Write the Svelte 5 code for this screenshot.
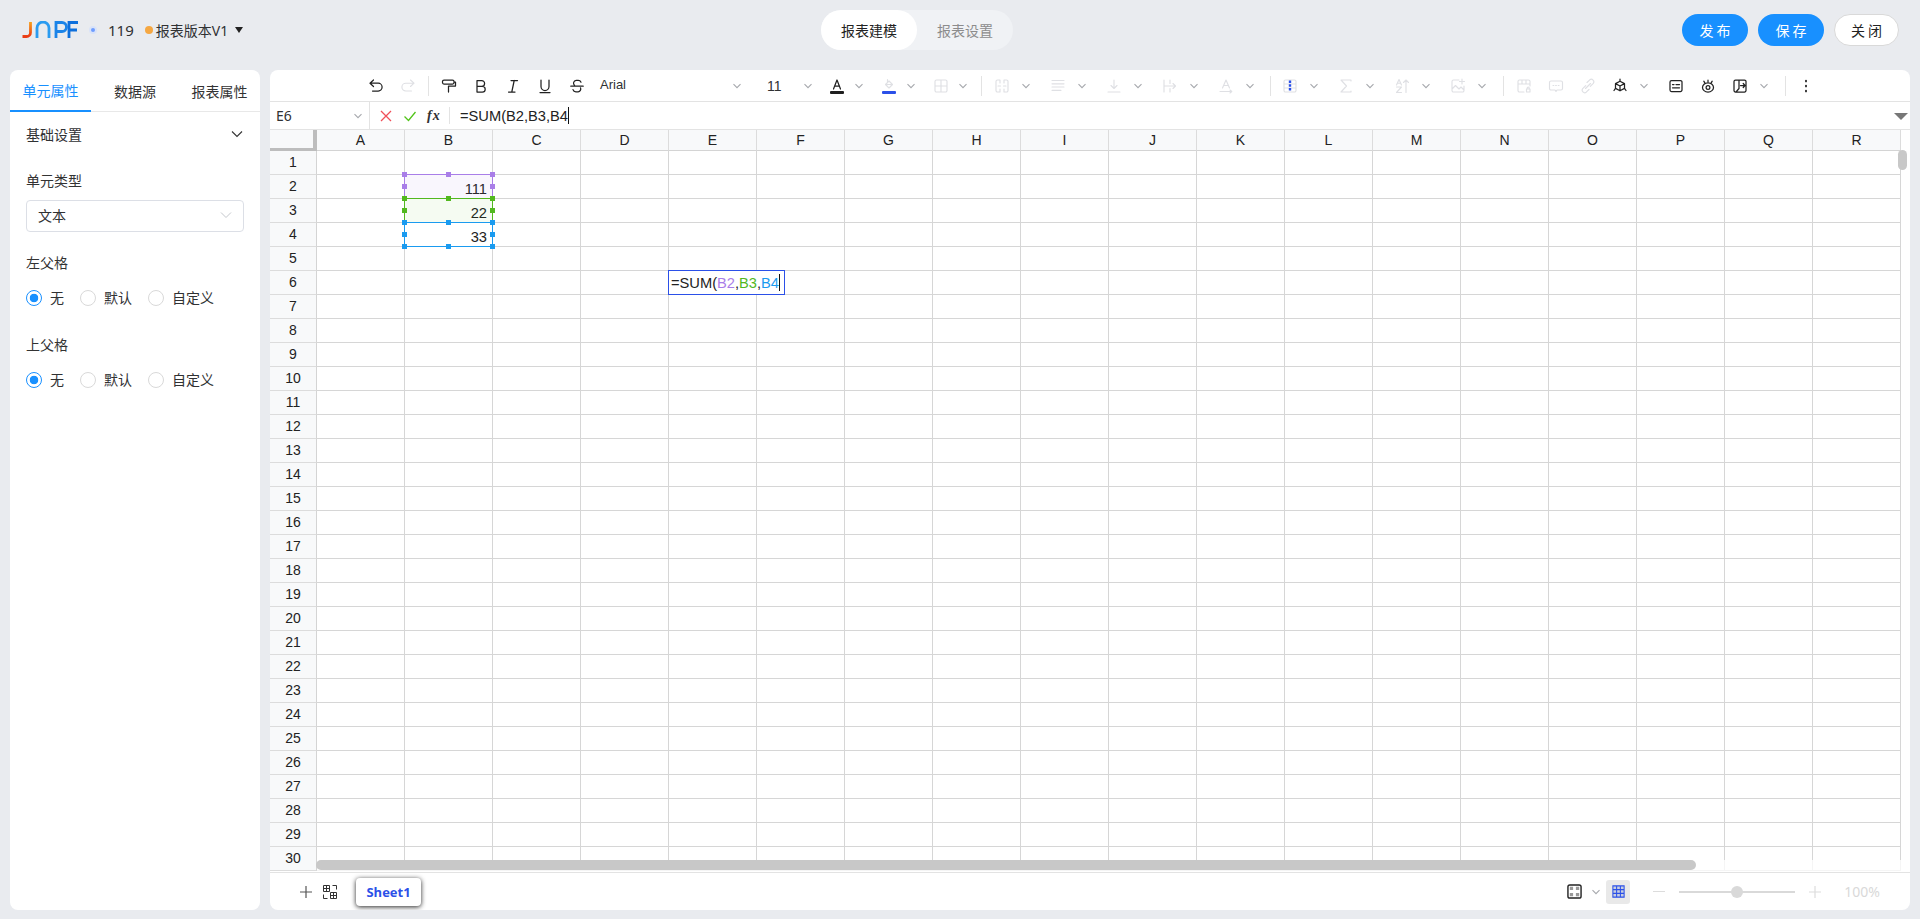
<script>
  const columns = "ABCDEFGHIJKLMNOPQR".split("");
  const rows = Array.from({ length: 30 }, (_, i) => i + 1);
  const values = { "B2": "111", "B3": "22", "B4": "33" };

  // one path per icon, 16x16 box, stroked with currentColor
  const paths = {
    undo: "M5.5 2 2 5.2l3.5 3.3M2 5.2h8.2a3.9 3.9 0 0 1 0 7.8H4.5",
    redo: "M10.5 2 14 5.2l-3.5 3.3M14 5.2H5.8a3.9 3.9 0 0 0 0 7.8h5.700",
    paint: "M3 2h8.500A1.500 1.500 0 0 1 13 3.500v1A1.500 1.500 0 0 1 11.500 6H3a1.500 1.500 0 0 1-1.500-1.500v-1A1.500 1.500 0 0 1 3 2zM13 4h1.500v4H7.500v6",
    bold: "M4 2.500h4.700a2.900 2.900 0 0 1 0 5.800H4zM4 8.300h5.300a2.900 2.900 0 0 1 0 5.800H4z",
    italic: "M6 2.500h6.500M3.500 14H10M9.200 2.500 6.800 14",
    underline: "M4 2v6.500a4 4 0 0 0 8 0V2M3 14.600h10",
    strike: "M12 4.200A3 3 0 0 0 9.200 2.400H7.200a2.800 2.800 0 0 0-1.600 5M1.800 8.200h12.400M4 11.600a3 3 0 0 0 2.900 2.200h2.200a2.800 2.800 0 0 0 2.400-4",
    color: "M4.500 11 8 2l3.500 9M5.600 8h4.800",
    fill: "M4.500 6.500 8 3l3.500 3.500L8 10zM6.500 1.500v3M5 6.500h6",
    border: "M3.500 2h9A1.500 1.500 0 0 1 14 3.500v9a1.500 1.500 0 0 1-1.500 1.500h-9A1.500 1.500 0 0 1 2 12.500v-9A1.500 1.500 0 0 1 3.500 2zM8 2v12M2 8h12",
    merge: "M6 2H3.500A1.500 1.500 0 0 0 2 3.500v9A1.500 1.500 0 0 0 3.500 14H6M10 2h2.500A1.500 1.500 0 0 1 14 3.500v9a1.500 1.500 0 0 1-1.500 1.500H10M6 2v3M6 11v3M10 2v3M10 11v3M4 8h2.500M12 8H9.500",
    align: "M2 2.500h12M2 5.800h12M2 9h12M2 12.300h9",
    valign: "M8 2v8M5 7.500 8 10.500l3-3M2 14h12",
    wrap: "M2 2v12M8 2v3.500M8 10.500V14M2 8h11M11 5.500 13.500 8 11 10.500",
    rotate: "M4.500 10 8 2l3.500 8M5.600 7.500h4.800M2 13.500h11.500M12 12l1.800 1.500L12 15",
    freeze: "M3.500 2h9A1.500 1.500 0 0 1 14 3.500v9a1.500 1.500 0 0 1-1.500 1.500h-9A1.500 1.500 0 0 1 2 12.500v-9A1.500 1.500 0 0 1 3.500 2zM2 6h12M2 10h12",
    sigma: "M13 3V2H3l5.500 6L3 14h10v-1",
    sort: "M2.500 7 5 1.500 7.500 7M3.300 5.200h3.400M2.500 9h5l-5 5.500h5M12 14.500V2M9.500 4.500 12 2l2.500 2.500",
    image: "M9 2H3.500A1.500 1.500 0 0 0 2 3.500v9A1.500 1.500 0 0 0 3.500 14h9a1.500 1.500 0 0 0 1.500-1.500V8M2 11l3.500-3.500L9 11l2-2 3 3M12 1v5M9.500 3.500h5",
    table: "M8 14H3.500A1.500 1.500 0 0 1 2 12.500v-9A1.500 1.500 0 0 1 3.500 2h9A1.500 1.500 0 0 1 14 3.500V8M2 6h12M6 2v4M10 2v4M10.500 11h3.500v3h-3.500zM11.200 11v-1a1 1 0 0 1 2 0v1",
    comment: "M3 3h10a1.500 1.500 0 0 1 1.500 1.500v6A1.500 1.500 0 0 1 13 12H9l-1 1.500L7 12H3a1.500 1.500 0 0 1-1.500-1.500v-6A1.500 1.500 0 0 1 3 3zM5 7.500h.8M7.600 7.500h.8M10.200 7.500h.8",
    link: "M7 4.500 9.800 1.800a2.500 2.500 0 0 1 3.500 3.500l-3 3M9 11.500l-2.800 2.700a2.500 2.500 0 0 1-3.500-3.500l3-3M5.500 10.500l5-5",
    cube: "M8 3.200 12.500 5.600v4.800L8 12.800l-4.500-2.400V5.600zM3.500 5.600 8 8l4.500-2.400M8 8v4.800M8 1.200v2M2 12.500l1.500-2.100M14 12.500l-1.500-2.100",
    caption: "M3.500 2.500h9A1.500 1.500 0 0 1 14 4v8a1.500 1.500 0 0 1-1.500 1.500h-9A1.500 1.500 0 0 1 2 12V4a1.500 1.500 0 0 1 1.500-1.500zM4.500 6.500h1.500M8 6.500h3.500M4.500 9.800h7",
    eye: "M8 4.800c3.200 0 5.500 2.200 5.500 4.600S11.200 14 8 14s-5.500-2.200-5.500-4.600S4.800 4.800 8 4.800zM8 7.500a1.900 1.900 0 1 1 0 3.800 1.900 1.900 0 0 1 0-3.800zM4.800 4.800l-1-1.600M8 4V2.200M11.200 4.800l1-1.600",
    exportIcon: "M3.500 2h9A1.500 1.500 0 0 1 14 3.500v9a1.500 1.500 0 0 1-1.500 1.500h-9A1.500 1.500 0 0 1 2 12.500v-9A1.500 1.500 0 0 1 3.500 2zM7 2v8.500L4 14M8.500 7.500H13M11.200 5.500 13 7.500l-1.800 2",
    dots: "M8 2.600v.8M8 7.600v.8M8 12.600v.8"
  };

  // toolbar description, left to right; kind sets which box the item gets
  const toolbar = [
    { icon: "undo" }, { icon: "redo", off: true }, { sep: "first" },
    { icon: "paint" }, { icon: "bold" }, { icon: "italic" }, { icon: "underline" }, { icon: "strike" },
    { select: "Arial", width: "font" }, { select: "11", width: "size" },
    { icon: "color", bar: "#1f1f1f", menu: "small" }, { icon: "fill", off: true, bar: "#2b50e8", menu: "small" },
    { icon: "border", off: true, menu: "small" }, { sep: "second" },
    { icon: "merge", off: true, menu: "wide" }, { icon: "align", off: true, menu: "wide" },
    { icon: "valign", off: true, menu: "wide" }, { icon: "wrap", off: true, menu: "wide" },
    { icon: "rotate", off: true, menu: "wide" }, { sep: "third" },
    { icon: "freeze", off: true, accent: "M8 2.500v11", menu: "wide" }, { icon: "sigma", off: true, menu: "wide" },
    { icon: "sort", off: true, menu: "wide" }, { icon: "image", off: true, menu: "wide" }, { sep: "fourth" },
    { icon: "table", off: true }, { icon: "comment", off: true }, { icon: "link", off: true },
    { icon: "cube", menu: "wide" }, { icon: "caption" }, { icon: "eye" }, { icon: "exportIcon", menu: "wide" },
    { sep: "fourth" }, { icon: "dots", heavy: true }
  ];

  const ranges = [
    { row: 2, tone: "purple" },
    { row: 3, tone: "green" },
    { row: 4, tone: "blue" }
  ];
  const handles = ["tl", "tm", "tr", "ml", "mr", "bl", "bm", "br"];
  const radios = ["无", "默认", "自定义"];
</script>

{#snippet chevron(size = 10)}
  <svg class="chev" width={size} height={size} viewBox="0 0 10 10"><path d="M1.500 3.200 5 6.700l3.500-3.500" /></svg>
{/snippet}

{#snippet radioGroup()}
  <div class="radios">
    {#each radios as label, i}
      <span class="radio-item">
        <span class="radio" class:checked={i === 0}></span>
        {label}
      </span>
    {/each}
  </div>
{/snippet}

<div class="page">
  <header class="topbar">
    <div class="brand">
      <svg class="logo" width="56" height="18" viewBox="0 0 56 18" fill="none">
        <defs>
          <linearGradient id="logoJ" x1="0" y1="0" x2="0" y2="1">
            <stop offset="0" stop-color="#f7a11a" />
            <stop offset="1" stop-color="#ea3b16" />
          </linearGradient>
        </defs>
        <path d="M8.500 1v10.500a4 4 0 0 1-4 4H.5" stroke="url(#logoJ)" stroke-width="2.800" />
        <path d="M15 17V7a6 6 0 0 1 12 0V17" stroke="#2a9bf0" stroke-width="2.800" />
        <path d="M34 17V1.500h6a4.500 4.500 0 0 1 0 9h-6" stroke="#1b84e8" stroke-width="2.800" />
        <path d="M47 17V1.500h9M47 9h8" stroke="#0d6fdc" stroke-width="2.800" />
      </svg>
      <span class="brand-dot"></span>
      <span class="report-id">119</span>
      <span class="version-dot"></span>
      <span class="version">报表版本V1</span>
      <span class="caret"></span>
    </div>
    <div class="mode-switch">
      <span class="mode active">报表建模</span>
      <span class="mode">报表设置</span>
    </div>
    <div class="actions">
      <button class="btn primary">发布</button>
      <button class="btn primary">保存</button>
      <button class="btn plain">关闭</button>
    </div>
  </header>

  <main class="workspace">
    <aside class="side">
      <div class="tabs">
        <span class="tab active">单元属性</span>
        <span class="tab second">数据源</span>
        <span class="tab third">报表属性</span>
      </div>
      <div class="side-body">
        <div class="section-head">
          <span>基础设置</span>
          <svg width="14" height="14" viewBox="0 0 14 14" fill="none" stroke="#333" stroke-width="1.100"><path d="M2 4.500 7 9.500l5-5" /></svg>
        </div>
        <div class="label first">单元类型</div>
        <div class="select">
          <span>文本</span>
          <svg width="14" height="14" viewBox="0 0 14 14" fill="none" stroke="#c4c7cc" stroke-width="1"><path d="M2 4.500 7 9.500l5-5" /></svg>
        </div>
        <div class="label group">左父格</div>
        {@render radioGroup()}
        <div class="label group2">上父格</div>
        {@render radioGroup()}
      </div>
    </aside>

    <section class="sheet">
      <div class="toolbar">
        {#each toolbar as item}
          {#if item.sep}
            <span class="sep {item.sep}"></span>
          {:else if item.select}
            <span class="tool-select {item.width}">
              <span>{item.select}</span>
              {@render chevron()}
            </span>
          {:else}
            <span class="tool" class:off={item.off}>
              <svg width="16" height="16" viewBox="0 0 16 16" fill="none" stroke="currentColor" stroke-width={item.heavy ? 1.800 : item.off ? 1.150 : 1.250} stroke-linecap="round" stroke-linejoin="round">
                <path d={paths[item.icon]} />
                {#if item.accent}
                  <path d={item.accent} stroke="#2b50e8" stroke-width="2.400" stroke-linecap="butt" stroke-dasharray="2.500 1.200" />
                {/if}
              </svg>
              {#if item.bar}
                <span class="color-bar" style="background: {item.bar}"></span>
              {/if}
            </span>
            {#if item.menu}
              <span class="tool-menu {item.menu}">{@render chevron()}</span>
            {/if}
          {/if}
        {/each}
      </div>

      <div class="formula">
        <div class="name-box">
          <span>E6</span>
          {@render chevron()}
        </div>
        <div class="formula-actions">
          <svg width="14" height="14" viewBox="0 0 14 14" fill="none" stroke="#f0505a" stroke-width="1.300"><path d="M2 2l10 10M12 2 2 12" /></svg>
          <svg width="14" height="14" viewBox="0 0 14 14" fill="none" stroke="#52c41a" stroke-width="1.300"><path d="M1.500 7.500 5.500 11.500 12.500 3" /></svg>
          <span class="fx">fx</span>
        </div>
        <div class="formula-text">=SUM(B2,B3,B4<span class="text-caret"></span></div>
        <span class="formula-toggle"></span>
      </div>

      <div class="grid-wrap">
        <div class="grid">
          <div class="corner"></div>
          {#each columns as col}
            <div class="col-head">{col}</div>
          {/each}
          {#each rows as row}
            <div class="row-head">{row}</div>
            {#each columns as col}
              <div class="cell">{values[col + row] ?? ""}</div>
            {/each}
          {/each}
        </div>

        {#each ranges as range}
          <div class="range {range.tone}" style="top: {44 + (range.row - 2) * 24}px">
            {#each handles as h}
              <span class="handle {h}"></span>
            {/each}
          </div>
        {/each}

        <div class="editor">=SUM(<span class="purple-text">B2</span>,<span class="green-text">B3</span>,<span class="blue-text">B4</span><span class="text-caret"></span></div>

        <div class="v-thumb"></div>
        <div class="h-track"><div class="h-thumb"></div></div>
      </div>

      <footer class="sheet-foot">
        <svg class="add" width="14" height="14" viewBox="0 0 14 14" fill="none" stroke="#555" stroke-width="1.200"><path d="M7 1v12M1 7h12" /></svg>
        <svg class="all-sheets" width="16" height="16" viewBox="0 0 16 16" fill="none" stroke="#333" stroke-width="1"><path d="M1.500 1.500h6v6h-6zM1.500 4.500h6M4.500 1.500v6M8.500 8.500h6v6h-6zM8.500 11.500h6M11.500 8.500v6M10.500 1.500h4v4M1.500 10.500v4h4" /></svg>
        <span class="sheet-tab">Sheet1</span>
        <span class="foot-spacer"></span>
        <svg width="15" height="15" viewBox="0 0 16 16" fill="none" stroke="#222" stroke-width="1.500"><path d="M3 1h10a2 2 0 0 1 2 2v10a2 2 0 0 1-2 2H3a2 2 0 0 1-2-2V3a2 2 0 0 1 2-2z" /><path d="M3 3h3.500v3.500H3zM9.500 3H13v3.500H9.500zM3 9.500h3.500V13H3zM9.500 9.500H13V13H9.500z" fill="#999" stroke="none" /></svg>
        <span class="foot-chev">{@render chevron()}</span>
        <span class="grid-toggle">
          <svg width="15" height="15" viewBox="0 0 16 16" fill="#c9cfdf" stroke="#2b50e8" stroke-width="1.100"><path d="M2 2h12v12H2zM2 6h12M2 10h12M6 2v12M10 2v12" /></svg>
        </span>
        <span class="zoom-minus"></span>
        <span class="slider"><span class="slider-thumb"></span></span>
        <svg class="zoom-plus" width="12" height="12" viewBox="0 0 12 12" fill="none" stroke="#dcdcdc" stroke-width="1.200"><path d="M6 0v12M0 6h12" /></svg>
        <span class="zoom-label">100%</span>
      </footer>
    </section>
  </main>
</div>

<style>
  :global(body) {
    margin: 0;
    background: #e9ebef;
  }

  .page {
    display: flex;
    flex-direction: column;
    height: 919px;
    overflow: hidden;
    background: #e9ebef;
    color: #303133;
    font-family: "Noto Sans", "Noto Sans CJK SC", sans-serif;
    font-size: 14px;
  }

  /* header */
  .topbar {
    display: flex;
    align-items: center;
    flex: 0 0 60px;
    height: 60px;
  }

  .brand {
    display: flex;
    align-items: center;
    flex: 0 0 799px;
    margin-left: 22px;
  }

  .brand-dot {
    width: 4px;
    height: 4px;
    margin-left: 13px;
    border-radius: 50%;
    background: #6f9dff;
    box-shadow: 0 0 0 2px #d9e3f9;
  }

  .report-id {
    margin-left: 13px;
    font-size: 15px;
  }

  .version-dot {
    width: 8px;
    height: 8px;
    margin-left: 11px;
    border-radius: 50%;
    background: #f5a742;
  }

  .version {
    margin-left: 3px;
  }

  .caret {
    width: 0;
    height: 0;
    margin: 0 0 0 7px;
    border-left: 4px solid transparent;
    border-right: 4px solid transparent;
    border-top: 6px solid #222;
  }

  .mode-switch {
    display: flex;
    height: 40px;
    border-radius: 20px;
    background: #f0f2f5;
  }

  .mode {
    display: flex;
    align-items: center;
    justify-content: center;
    width: 96px;
    border-radius: 20px;
    color: #8c8c8c;
  }

  .mode.active {
    background: #fff;
    color: #222;
  }

  .actions {
    display: flex;
    gap: 10px;
    margin-left: auto;
    margin-right: 21px;
  }

  .btn {
    width: 66px;
    height: 32px;
    padding: 0;
    border: 0;
    border-radius: 16px;
    font: inherit;
    letter-spacing: 3px;
    text-indent: 3px;
  }

  .btn.primary {
    background: #1890ff;
    color: #fff;
  }

  .btn.plain {
    width: 65px;
    border: 1px solid #d9d9d9;
    background: #fff;
    color: #222;
  }

  /* body */
  .workspace {
    display: flex;
    flex: 1;
    gap: 10px;
    min-height: 0;
    margin-top: 10px;
    padding: 0 10px 9px;
  }

  .side {
    flex: 0 0 250px;
    border-radius: 8px;
    background: #fff;
  }

  .tabs {
    display: flex;
    height: 41px;
    border-bottom: 1px solid #e8e8e8;
  }

  .tab {
    display: flex;
    align-items: center;
    justify-content: center;
    box-sizing: border-box;
    width: 81px;
    height: 42px;
    color: #333;
  }

  .tab.second {
    width: 88px;
  }

  .tab.active {
    border-bottom: 2px solid #1890ff;
    color: #1890ff;
  }

  .side-body {
    padding: 0 16px;
  }

  .section-head {
    display: flex;
    align-items: center;
    justify-content: space-between;
    height: 44px;
  }

  .label {
    height: 20px;
    line-height: 20px;
    color: #333;
  }

  .label.first {
    margin-top: 15px;
    margin-bottom: 9px;
  }

  .label.group {
    margin-top: 21px;
  }

  .label.group2 {
    margin-top: 29px;
  }

  .select {
    display: flex;
    align-items: center;
    justify-content: space-between;
    box-sizing: border-box;
    width: 218px;
    height: 32px;
    padding: 0 10px 2px 11px;
    border: 1px solid #dcdfe6;
    border-radius: 4px;
  }

  .radios {
    display: flex;
    height: 16px;
    margin-top: 17px;
  }

  .radio-item {
    display: flex;
    align-items: center;
    gap: 8px;
    margin-right: 16px;
    line-height: 16px;
  }

  .radio {
    box-sizing: border-box;
    width: 16px;
    height: 16px;
    border: 1px solid #d9d9d9;
    border-radius: 50%;
    background: #fff;
  }

  .radio.checked {
    border-color: #1890ff;
    background: radial-gradient(circle, #1890ff 0 4px, #fff 4.600px);
  }

  /* sheet */
  .sheet {
    display: flex;
    flex: 1;
    flex-direction: column;
    min-width: 0;
    overflow: hidden;
    border-radius: 8px;
    background: #fff;
  }

  .toolbar {
    display: flex;
    align-items: center;
    box-sizing: border-box;
    flex: 0 0 32px;
    padding-left: 90px;
    border-bottom: 1px solid #e3e3e3;
  }

  .tool {
    position: relative;
    display: flex;
    align-items: center;
    justify-content: center;
    flex: 0 0 32px;
    height: 31px;
    color: #222;
  }

  .tool.off {
    color: #dfe0e4;
  }

  .color-bar {
    position: absolute;
    left: 9px;
    bottom: 7px;
    width: 14px;
    height: 3px;
    border-radius: 1px;
  }

  .tool-menu {
    display: flex;
    align-items: center;
    justify-content: center;
  }

  .tool-menu.small {
    flex: 0 0 12px;
    margin-right: 8px;
  }

  .tool-menu.wide {
    flex: 0 0 16px;
    margin-right: 8px;
  }

  .chev {
    fill: none;
    stroke: #a6a8ad;
    stroke-width: 1.100;
  }

  .sep {
    flex: 0 0 1px;
    height: 20px;
    background: #e3e3e3;
  }

  .sep.first {
    margin: 0 4px;
  }

  .sep.second {
    margin: 0 4px;
  }

  .sep.third {
    margin: 0 3px 0 4px;
  }

  .sep.fourth {
    margin: 0 4px 0 5px;
  }

  .tool-select {
    display: flex;
    align-items: center;
    justify-content: space-between;
    box-sizing: border-box;
    font-family: "Liberation Sans", Arial, sans-serif;
    font-size: 13px;
  }

  .tool-select.font {
    flex: 0 0 157px;
    padding: 0 8px 3px 7px;
  }

  .tool-select.size {
    flex: 0 0 71px;
    padding: 0 8px 0 17px;
    font-size: 14px;
  }

  .tool-select.font :global(svg) {
    margin-top: 3px;
  }

  .formula {
    position: relative;
    display: flex;
    align-items: center;
    box-sizing: border-box;
    flex: 0 0 28px;
    border-bottom: 1px solid #e3e3e3;
  }

  .name-box {
    display: flex;
    align-items: center;
    justify-content: space-between;
    box-sizing: border-box;
    flex: 0 0 100px;
    height: 27px;
    padding: 0 6px;
    border-right: 1px solid #e3e3e3;
  }

  .formula-actions {
    display: flex;
    align-items: center;
    gap: 10px;
    box-sizing: border-box;
    flex: 0 0 80px;
    height: 17px;
    padding-left: 9px;
    border-right: 1px solid #e3e3e3;
  }

  .fx {
    font: italic 14px "Liberation Serif", serif;
    font-weight: 700;
    letter-spacing: 1px;
  }

  .formula-text {
    display: flex;
    align-items: center;
    height: 20px;
    margin-left: 10px;
    font-family: "Liberation Sans", Arial, sans-serif;
    font-size: 14.670px;
    color: #222;
  }

  .text-caret {
    display: inline-block;
    flex: none;
    width: 1px;
    height: 17px;
    margin-left: 0.500px;
    background: #111;
  }

  .formula-toggle {
    position: absolute;
    right: 2px;
    top: 11px;
    width: 0;
    height: 0;
    border-left: 7px solid transparent;
    border-right: 7px solid transparent;
    border-top: 7px solid #777;
  }

  .grid-wrap {
    position: relative;
    flex: 0 0 742px;
    overflow: hidden;
  }

  .grid {
    display: grid;
    grid-template-columns: 47px repeat(18, 88px);
    grid-template-rows: 21px repeat(30, 24px);
    font-family: "Liberation Sans", Arial, sans-serif;
    color: #222;
  }

  .corner {
    box-sizing: border-box;
    border-right: 4px solid #bdbdbd;
    border-bottom: 3px solid #bdbdbd;
    background: #f8f9fa;
  }

  .col-head,
  .row-head {
    display: flex;
    align-items: center;
    justify-content: center;
    box-sizing: border-box;
    background: #f8f9fa;
    font-size: 14px;
  }

  .col-head {
    border-right: 1px solid #dcdcdc;
    border-bottom: 1px solid #d4d4d4;
  }

  .row-head {
    padding-bottom: 2px;
    border-right: 1px solid #d4d4d4;
    border-bottom: 1px solid #dcdcdc;
  }

  .cell {
    box-sizing: border-box;
    padding: 4px 5px 0 0;
    border-right: 1px solid #d6d6d6;
    border-bottom: 1px solid #d6d6d6;
    text-align: right;
    font-size: 14.670px;
    line-height: 20px;
  }

  .range {
    position: absolute;
    left: 134px;
    box-sizing: border-box;
    width: 89px;
    height: 25px;
    border: 1px solid;
  }

  .range.purple {
    border-color: #a97ee8;
    background: rgba(169, 126, 232, 0.07);
  }

  .range.green {
    border-color: #52b81f;
    background: rgba(82, 184, 31, 0.06);
  }

  .range.blue {
    border-color: #1a9bf0;
  }

  .handle {
    position: absolute;
    width: 5px;
    height: 5px;
  }

  .purple .handle {
    background: #a97ee8;
  }

  .green .handle {
    background: #52b81f;
  }

  .blue .handle {
    background: #1a9bf0;
  }

  .tl, .tm, .tr { top: -3px; }
  .ml, .mr { top: 9px; }
  .bl, .bm, .br { bottom: -3px; }
  .tl, .ml, .bl { left: -3px; }
  .tm, .bm { left: 41px; }
  .tr, .mr, .br { right: -3px; }

  .editor {
    position: absolute;
    left: 398px;
    top: 140px;
    display: flex;
    align-items: center;
    box-sizing: border-box;
    width: 117px;
    height: 25px;
    padding-left: 2px;
    border: 1px solid #2b50e8;
    background: #fff;
    font-family: "Liberation Sans", Arial, sans-serif;
    font-size: 14.670px;
    white-space: pre;
    color: #222;
  }

  .purple-text { color: #a97ee8; }
  .green-text { color: #52b81f; }
  .blue-text { color: #1a9bf0; }

  .v-thumb {
    position: absolute;
    left: 1628px;
    top: 20px;
    width: 9px;
    height: 20px;
    border-radius: 5px;
    background: #c8c8c8;
  }

  .h-track {
    position: absolute;
    left: 47px;
    right: 0;
    top: 730px;
    height: 11px;
    background: rgba(255, 255, 255, 0.75);
  }

  .h-thumb {
    width: 1380px;
    height: 10px;
    margin-left: -1px;
    border-radius: 5px;
    background: #c8c8c8;
  }

  .sheet-foot {
    display: flex;
    align-items: center;
    box-sizing: border-box;
    flex: 1;
    padding-left: 29px;
    border-top: 1px solid #e3e3e3;
  }

  .all-sheets {
    margin-left: 9px;
  }

  .sheet-tab {
    display: flex;
    align-items: center;
    justify-content: center;
    width: 65px;
    height: 28px;
    margin-left: 18px;
    border-radius: 4px;
    background: #fff;
    box-shadow: 0 1px 5px rgba(0, 0, 0, 0.85);
    color: #2b50e8;
    font-family: "Open Sans", sans-serif;
    font-size: 13px;
    font-weight: 700;
  }

  .foot-spacer {
    flex: 1;
  }

  .foot-chev {
    display: flex;
    margin-left: 9px;
  }

  .grid-toggle {
    display: flex;
    align-items: center;
    justify-content: center;
    width: 24px;
    height: 24px;
    margin-left: 5px;
    border-radius: 3px;
    background: #e9e9e9;
  }

  .zoom-minus {
    width: 12px;
    height: 1.500px;
    margin-left: 23px;
    background: #dcdcdc;
  }

  .slider {
    position: relative;
    width: 116px;
    height: 2px;
    margin-left: 14px;
    background: #d9d9d9;
  }

  .slider-thumb {
    position: absolute;
    left: 52px;
    top: -5px;
    width: 12px;
    height: 12px;
    border-radius: 50%;
    background: #d9d9d9;
  }

  .zoom-plus {
    margin-left: 14px;
  }

  .zoom-label {
    flex: 0 0 34px;
    margin-left: 23px;
    margin-right: 30px;
    color: #d9d9d9;
    font-size: 14px;
    white-space: nowrap;
  }
</style>
